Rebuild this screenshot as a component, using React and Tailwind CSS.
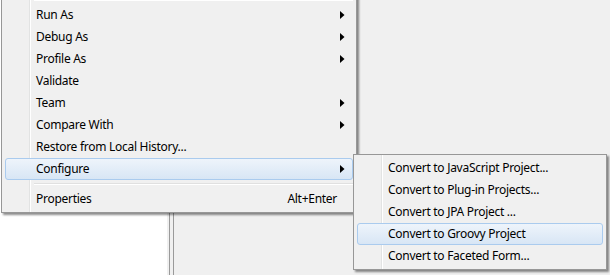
import React from "react";

const Arrow = () => (
  <svg width="5" height="8" viewBox="0 0 5 8" className="shrink-0">
    <path d="M0 0 L4.5 4 L0 8 Z" fill="#000" />
  </svg>
);

const Item = ({ label, arrow, shortcut, active }) => (
  <div
    className={
      "relative h-[22px] mx-[1px] flex items-center rounded-[3px] border " +
      (active
        ? "border-[#aacbee] bg-gradient-to-b from-[#eef4fb] to-[#d8e6f5]"
        : "border-transparent")
    }
  >
    <span className="pl-[30px] flex-1">{label}</span>
    {shortcut && <span className="pr-[15px]">{shortcut}</span>}
    {arrow && <span className="pr-[7px] flex items-center"><Arrow /></span>}
  </div>
);

const Sep = () => (
  <div className="h-[8px] flex flex-col justify-center pl-[30px] pr-[1px]">
    <div className="h-px bg-[#e0e0e0]" />
    <div className="h-px bg-white" />
  </div>
);

const Menu = ({ className, children }) => (
  <div
    className={
      "absolute border border-[#979797] bg-[#f0f0f0] shadow-[2px_2px_2px_rgba(0,0,0,0.45)] px-[2px] " +
      className
    }
  >
    <div className="absolute left-[27px] top-0 bottom-0 w-px bg-[#e2e3e3]" />
    <div className="absolute left-[28px] top-0 bottom-0 w-px bg-white" />
    <div className="relative flex flex-col">{children}</div>
  </div>
);

export default function App() {
  return (
    <div
      className="relative w-[610px] h-[275px] overflow-hidden bg-[#f0f0f0] text-[12px] tracking-[-0.28px] text-black"
      style={{ fontFamily: '"Noto Sans", "Noto Sans CJK KR", sans-serif' }}
    >
      <div className="flex h-full">
        <div className="w-[167px] h-full bg-white" />
        <div className="w-[2px] h-full bg-[#f0f0f0]" />
        <div className="w-px h-full bg-[#9a9a9a]" />
        <div className="w-[3px] h-full bg-[#f0f0f0]" />
        <div className="w-px h-full bg-[#9a9a9a]" />
        <div className="flex-1 h-full bg-[#f0f0f0]" />
      </div>

      <Menu className="left-[1px] top-[-5px] w-[356px] pb-[2px]">
        <Sep />
        <Item label="Run As" arrow />
        <Item label="Debug As" arrow />
        <Item label="Profile As" arrow />
        <Item label="Validate" />
        <Item label="Team" arrow />
        <Item label="Compare With" arrow />
        <Item label="Restore from Local History..." />
        <Item label="Configure" arrow active />
        <Sep />
        <Item label="Properties" shortcut="Alt+Enter" />
      </Menu>

      <Menu className="left-[353px] top-[154px] w-[254px] py-[2px]">
        <Item label="Convert to JavaScript Project..." />
        <Item label="Convert to Plug-in Projects..." />
        <Item label="Convert to JPA Project ..." />
        <Item label="Convert to Groovy Project" active />
        <Item label="Convert to Faceted Form..." />
      </Menu>
    </div>
  );
}
